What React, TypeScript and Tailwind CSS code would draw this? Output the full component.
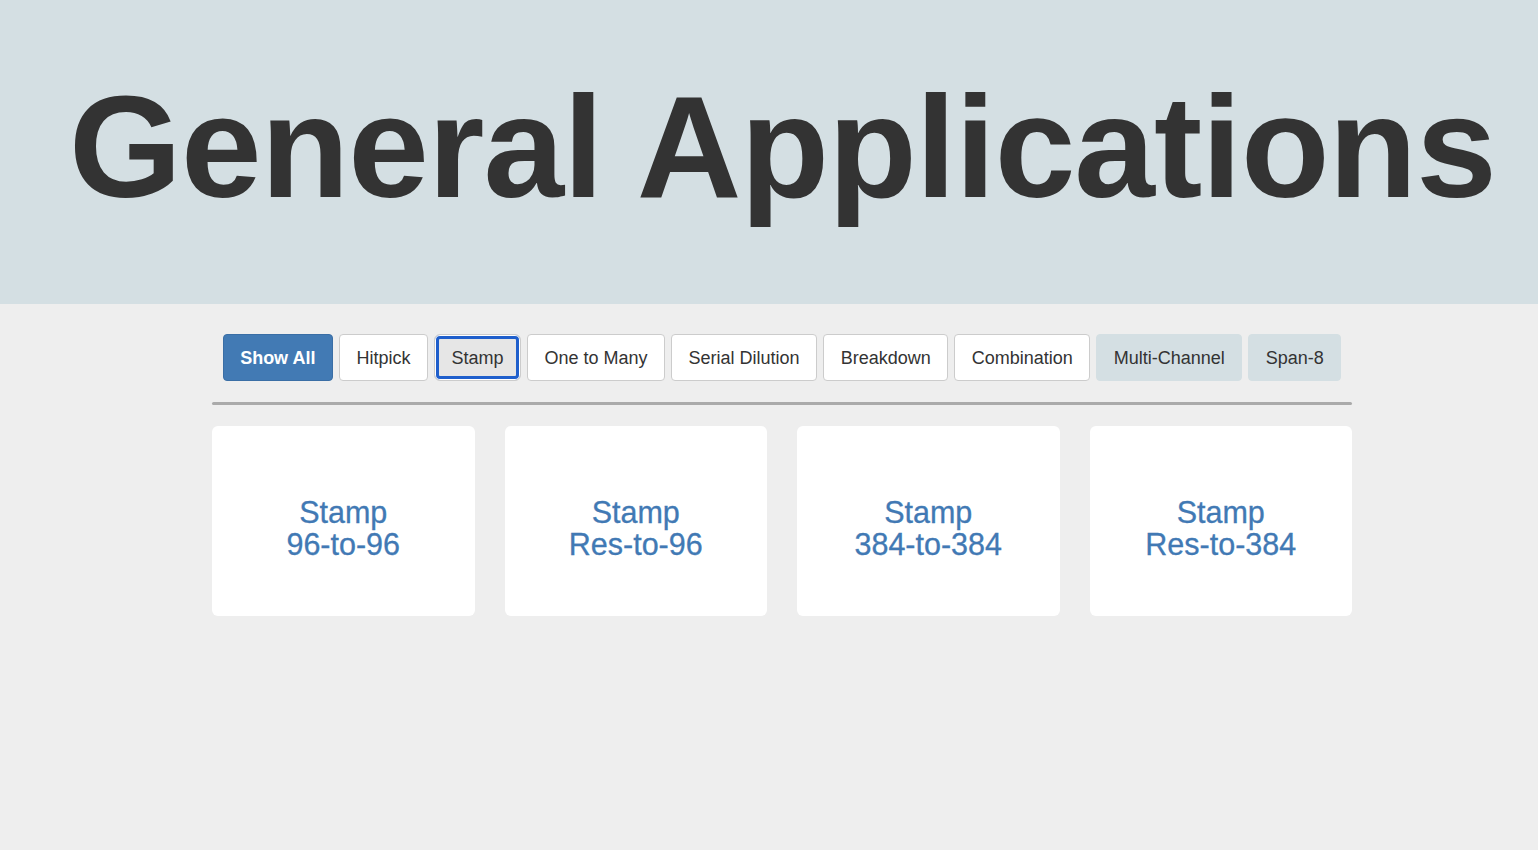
const filters = [
  { label: 'Show All', kind: 'active' },
  { label: 'Hitpick', kind: 'plain' },
  { label: 'Stamp', kind: 'focused' },
  { label: 'One to Many', kind: 'plain' },
  { label: 'Serial Dilution', kind: 'plain' },
  { label: 'Breakdown', kind: 'plain' },
  { label: 'Combination', kind: 'plain' },
  { label: 'Multi-Channel', kind: 'muted' },
  { label: 'Span-8', kind: 'muted' },
]

const cards = [
  ['Stamp', '96-to-96'],
  ['Stamp', 'Res-to-96'],
  ['Stamp', '384-to-384'],
  ['Stamp', 'Res-to-384'],
]

function FilterButton({ label, kind }: { label: string; kind: string }) {
  const base = 'h-[47px] px-[16.5px] rounded-[4px] text-[18px] leading-none border'
  if (kind === 'active') {
    return <button className={`${base} bg-[#427ab4] border-[#3a6ea5] text-white font-bold`}>{label}</button>
  }
  if (kind === 'focused') {
    return (
      <button className={`${base} rounded-[6px] bg-[#e6e6e6] border-[#cccccc] text-[#333] shadow-[inset_0_0_0_1px_#ffffff,inset_0_0_0_4px_#1f5fcc]`}>
        {label}
      </button>
    )
  }
  if (kind === 'muted') {
    return <button className={`${base} bg-[#d4dfe3] border-[#d4dfe3] text-[#333]`}>{label}</button>
  }
  return <button className={`${base} bg-white border-[#cccccc] text-[#333]`}>{label}</button>
}

export default function App() {
  return (
    <div className="min-h-[850px] bg-[#eeeeee] font-['Liberation_Sans',Arial,sans-serif]">
      <header className="h-[304px] bg-[#d4dfe3] pt-[75px] pl-[69px]">
        <h1 className="text-[145px] leading-none font-bold text-[#333333] tracking-[-0.9px]">General Applications</h1>
      </header>

      <main className="w-[1140px] ml-[212px]">
        <div className="flex justify-center gap-[6px] pt-[30px]">
          {filters.map((f) => (
            <FilterButton key={f.label} label={f.label} kind={f.kind} />
          ))}
        </div>

        <div className="mt-[21px] h-[3px] rounded-full bg-[#aaaaaa]" />

        <div className="grid grid-cols-4 gap-[30px] mt-[21px]">
          {cards.map(([a, b]) => (
            <div key={b} className="h-[190px] bg-white rounded-[6px] flex flex-col items-center justify-center pt-[13px]">
              <span className="text-[30.5px] leading-[32px] text-[#4179b4] [-webkit-text-stroke:0.3px_#4179b4]">{a}</span>
              <span className="text-[30.5px] leading-[32px] text-[#4179b4] [-webkit-text-stroke:0.3px_#4179b4]">{b}</span>
            </div>
          ))}
        </div>
      </main>
    </div>
  )
}
